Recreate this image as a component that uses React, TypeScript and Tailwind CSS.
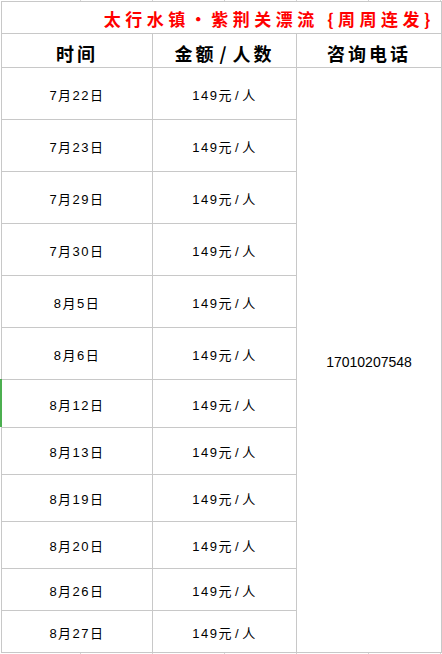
import React from "react";

const rows: { date: string; h: string }[] = [
  { date: "7月22日", h: "h-[51px]" },
  { date: "7月23日", h: "h-[51px]" },
  { date: "7月29日", h: "h-[51px]" },
  { date: "7月30日", h: "h-[51px]" },
  { date: "8月5日", h: "h-[51px]" },
  { date: "8月6日", h: "h-[51px]" },
  { date: "8月12日", h: "h-[47px]" },
  { date: "8月13日", h: "h-[46px]" },
  { date: "8月19日", h: "h-[46px]" },
  { date: "8月20日", h: "h-[46px]" },
  { date: "8月26日", h: "h-[41px]" },
  { date: "8月27日", h: "h-[41px]" },
];

const cjk = { fontFamily: '"Noto Sans CJK SC", sans-serif' };
const body = { fontFamily: '"Liberation Sans", "Noto Sans CJK SC", sans-serif' };

// sheet gridline ticks peeking out above and below the table
const Ticks = () => (
  <div className="flex h-px">
    <div className="w-[80px]" />
    <div className="w-[72px] border-l border-[#d4d4d4]" />
    <div className="w-[72px] border-l border-[#d4d4d4]" />
    <div className="w-[72px] border-l border-[#d4d4d4]" />
    <div className="w-[72px] border-l border-[#d4d4d4]" />
    <div className="w-[72px] border-l border-[#d4d4d4]" />
    <div className="w-[2px] border-l border-[#d4d4d4]" />
  </div>
);

const App: React.FC = () => {
  return (
    <div className="relative w-[442px] h-[654px] bg-white overflow-hidden">
      <Ticks />

      {/* Table */}
      <div
        className="ml-[1px] w-[441px] grid grid-cols-[150px_143px_144px] gap-px p-px bg-[#c8c8c8]"
        style={{ gridTemplateRows: "31px 33px 51px 51px 51px 51px 51px 51px 47px 46px 46px 46px 41px 41px" }}
      >
        {/* Title */}
        <div
          className="col-span-3 bg-white flex items-center justify-end pr-[6px] pt-[2px] text-[17px] font-bold tracking-[4.5px] text-[#ff0000] leading-none"
          style={cjk}
        >
          太行水镇•紫荆关漂流 {"{"}周周连发{"}"}
        </div>

        {/* Header */}
        <div className="bg-white flex items-center justify-center pt-[5px] text-[18px] font-bold tracking-[3px] text-black leading-none" style={cjk}>
          时间
        </div>
        <div className="bg-white flex items-center justify-center pt-[5px] text-[18px] font-bold tracking-[3px] text-black leading-none" style={cjk}>
          金额<span className="mx-[3px]">/</span>人数
        </div>
        <div className="bg-white flex items-center justify-center pt-[5px] text-[18px] font-bold tracking-[3px] text-black leading-none" style={cjk}>
          咨询电话
        </div>

        {rows.map((r, i) => (
          <React.Fragment key={r.date}>
            <div
              className="bg-white flex items-center justify-center pt-[3px] text-[13px] tracking-[1.5px] text-black leading-none"
              style={{ ...body, gridColumn: 1, gridRow: i + 3 }}
            >
              {r.date}
            </div>
            <div
              className="bg-white flex items-center justify-center pt-[3px] text-[13px] tracking-[1.5px] text-black leading-none"
              style={{ ...body, gridColumn: 2, gridRow: i + 3 }}
            >
              149元<span className="mx-[2px]">/</span>人
            </div>
          </React.Fragment>
        ))}

        <div
          className="bg-white flex items-center justify-center pt-[4px] text-[14px] text-black leading-none"
          style={{ ...body, gridColumn: 3, gridRow: "3 / span 12" }}
        >
          17010207548
        </div>
      </div>

      <Ticks />

      {/* selected row marker */}
      <div className="absolute left-0 top-[379px] w-[2px] h-[48px] bg-[#4caf50]" />
    </div>
  );
};

export default App;
